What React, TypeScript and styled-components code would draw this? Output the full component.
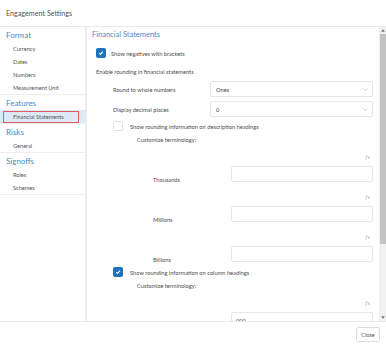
import React from "react";
import styled, { createGlobalStyle } from "styled-components";

const Global = createGlobalStyle`
  html, body { margin: 0; padding: 0; background: #fff; }
  body { font-family: Lato, "Open Sans", sans-serif; }
  * { box-sizing: border-box; }
`;

const Dialog = styled.div`
  width: 386px;
  height: 348px;
  background: #fff;
  display: flex;
  flex-direction: column;
  overflow: hidden;
`;

const Header = styled.div`
  height: 27px;
  flex: none;
  display: flex;
  align-items: center;
  padding-left: 6px;
  border-bottom: 1px solid #e9e9e9;
  font-size: 7.2px;
  color: #555;
`;

const Body = styled.div`
  flex: none;
  height: 294px;
  display: flex;
`;

const Sidebar = styled.div`
  width: 87px;
  flex: none;
  border-right: 2px solid #ececec;
  display: flex;
  flex-direction: column;
`;

const Section = styled.div`
  border-bottom: 1px solid #eeeeee;
  display: flex;
  flex-direction: column;
`;

const SectionTitle = styled.div`
  height: 15px;
  display: flex;
  align-items: center;
  padding-left: 6px;
  font-size: 8px;
  color: #4a8bc8;
`;

const NavItem = styled.div<{ $active?: boolean }>`
  height: 13px;
  display: flex;
  align-items: center;
  padding-left: 3px;
  font-size: 5.6px;
  color: #555;
  background: ${(p) => (p.$active ? "#dde9f5" : "transparent")};
`;

const NavLabel = styled.span<{ $active?: boolean }>`
  display: flex;
  align-items: center;
  height: 12px;
  width: 76px;
  padding-left: 9px;
  border: 1px solid ${(p) => (p.$active ? "#e05a63" : "transparent")};
`;

const Main = styled.div`
  flex: 1;
  min-width: 0;
  overflow: hidden;
  padding: 2px 6px 10px 5px;
  color: #4d4d4d;
  font-size: 5.7px;
`;

const ScrollTrack = styled.div`
  width: 7px;
  flex: none;
  background: #f1f1f1;
  display: flex;
  flex-direction: column;
  align-items: center;
`;

const ScrollArrow = styled.div`
  height: 7px;
  flex: none;
  display: flex;
  align-items: center;
  justify-content: center;
`;

const ScrollThumb = styled.div`
  width: 6px;
  height: 210px;
  flex: none;
  background: #c3c3c3;
`;

const ScrollSpacer = styled.div`
  flex: 1;
`;

const PanelTitle = styled.div`
  height: 10px;
  display: flex;
  align-items: center;
  font-size: 7.5px;
  color: #4a8bc8;
`;

const CheckRow = styled.div<{ $indent: number; $gap: number; $mt: number }>`
  display: flex;
  align-items: center;
  height: 10px;
  margin-top: ${(p) => p.$mt}px;
  margin-left: ${(p) => p.$indent}px;
  gap: ${(p) => p.$gap}px;
  white-space: nowrap;
`;

const Box = styled.span<{ $checked?: boolean }>`
  width: 10px;
  height: 10px;
  flex: none;
  border-radius: 1.5px;
  display: flex;
  align-items: center;
  justify-content: center;
  background: ${(p) => (p.$checked ? "#1f74bd" : "#fff")};
  border: 1px solid ${(p) => (p.$checked ? "#1f74bd" : "#e2e2e2")};
`;

const TextLine = styled.div<{ $indent: number; $mt: number }>`
  height: 8px;
  display: flex;
  align-items: center;
  margin-top: ${(p) => p.$mt}px;
  margin-left: ${(p) => p.$indent}px;
`;

const SelectRow = styled.div<{ $mt: number }>`
  display: grid;
  grid-template-columns: 97px 1fr;
  align-items: center;
  margin-top: ${(p) => p.$mt}px;
  padding-left: 21px;
`;

const SelectBox = styled.div`
  height: 16px;
  border: 1px solid #e6e6e6;
  border-radius: 2px;
  display: flex;
  align-items: center;
  justify-content: space-between;
  padding: 0 4px 0 5px;
  color: #444;
`;

const FieldGroup = styled.div<{ $mt: number }>`
  display: grid;
  grid-template-columns: 78px 1fr;
  align-items: end;
  margin-top: ${(p) => p.$mt}px;
  padding-left: 61px;
`;

const FieldLabel = styled.div`
  height: 8px;
  display: flex;
  align-items: center;
  margin-bottom: -1px;
`;

const FieldCol = styled.div`
  display: flex;
  flex-direction: column;
  gap: 5px;
`;

const Fx = styled.div`
  height: 8px;
  display: flex;
  align-items: center;
  justify-content: flex-end;
  padding-right: 3px;
  font-size: 5px;
  font-style: italic;
  color: #9a9a9a;
  font-family: "DejaVu Serif", serif;
`;

const Input = styled.div`
  height: 16px;
  border: 1px solid #e6e6e6;
  border-radius: 2px;
  display: flex;
  align-items: center;
  padding-left: 4px;
  color: #444;
`;

const Footer = styled.div`
  flex: 1;
  border-top: 1px solid #e9e9e9;
  display: flex;
  align-items: flex-start;
  justify-content: flex-end;
  padding: 5px 6px 0 0;
`;

const CloseButton = styled.button`
  width: 24px;
  height: 15px;
  padding: 0;
  border: 1px solid #dcdcdc;
  border-radius: 2px;
  background: #fff;
  font-family: Lato, sans-serif;
  font-size: 5.6px;
  color: #555;
`;

const Check = () => (
  <svg width="6" height="6" viewBox="0 0 10 10">
    <path d="M2 5.2 L4.2 7.3 L8.2 2.8" fill="none" stroke="#fff" strokeWidth="1.8" />
  </svg>
);

const Chevron = () => (
  <svg width="5" height="3" viewBox="0 0 10 6">
    <path d="M1 1 L5 5 L9 1" fill="none" stroke="#aaa" strokeWidth="1.2" />
  </svg>
);

const Arrow = ({ up }: { up?: boolean }) => (
  <svg width="4" height="3" viewBox="0 0 8 5">
    <path d={up ? "M0 5 L4 0 L8 5 Z" : "M0 0 L4 5 L8 0 Z"} fill="#777" />
  </svg>
);

const groups1 = [
  { label: "Thousands", value: "", mt: 10 },
  { label: "Millions", value: "", mt: 11 },
  { label: "Billions", value: "", mt: 11 },
];

const groups2 = [
  { label: "Thousands", value: "000", mt: 10 },
  { label: "Millions", value: "000,000", mt: 11 },
  { label: "Billions", value: "000,000,000", mt: 11 },
];

export default function App() {
  return (
    <>
      <Global />
      <Dialog>
        <Header>Engagement Settings</Header>
        <Body>
          <Sidebar>
            <Section>
              <SectionTitle>Format</SectionTitle>
              {["Currency", "Dates", "Numbers", "Measurement Unit"].map((t) => (
                <NavItem key={t}>
                  <NavLabel>{t}</NavLabel>
                </NavItem>
              ))}
            </Section>
            <Section>
              <SectionTitle>Features</SectionTitle>
              <NavItem $active>
                <NavLabel $active>Financial Statements</NavLabel>
              </NavItem>
            </Section>
            <Section>
              <SectionTitle>Risks</SectionTitle>
              <NavItem>
                <NavLabel>General</NavLabel>
              </NavItem>
            </Section>
            <Section>
              <SectionTitle>Signoffs</SectionTitle>
              {["Roles", "Schemes"].map((t) => (
                <NavItem key={t}>
                  <NavLabel>{t}</NavLabel>
                </NavItem>
              ))}
            </Section>
          </Sidebar>
          <Main>
            <PanelTitle>Financial Statements</PanelTitle>
            <CheckRow $indent={4} $gap={5} $mt={9}>
              <Box $checked>
                <Check />
              </Box>
              <span>Show negatives with brackets</span>
            </CheckRow>
            <TextLine $indent={4} $mt={9}>
              Enable rounding in financial statements
            </TextLine>
            <SelectRow $mt={6}>
              <span>Round to whole numbers</span>
              <SelectBox>
                <span>Ones</span>
                <Chevron />
              </SelectBox>
            </SelectRow>
            <SelectRow $mt={4}>
              <span>Display decimal places</span>
              <SelectBox>
                <span>0</span>
                <Chevron />
              </SelectBox>
            </SelectRow>
            <CheckRow $indent={21} $gap={7} $mt={4}>
              <Box />
              <span>Show rounding information on description headings</span>
            </CheckRow>
            <TextLine $indent={45} $mt={4}>
              Customize terminology:
            </TextLine>
            {groups1.map((g) => (
              <FieldGroup key={"a" + g.label} $mt={g.mt}>
                <FieldLabel>{g.label}</FieldLabel>
                <FieldCol>
                  <Fx>fx</Fx>
                  <Input>{g.value}</Input>
                </FieldCol>
              </FieldGroup>
            ))}
            <CheckRow $indent={21} $gap={7} $mt={5}>
              <Box $checked>
                <Check />
              </Box>
              <span>Show rounding information on column headings</span>
            </CheckRow>
            <TextLine $indent={45} $mt={4}>
              Customize terminology:
            </TextLine>
            {groups2.map((g) => (
              <FieldGroup key={"b" + g.label} $mt={g.mt}>
                <FieldLabel>{g.label}</FieldLabel>
                <FieldCol>
                  <Fx>fx</Fx>
                  <Input>{g.value}</Input>
                </FieldCol>
              </FieldGroup>
            ))}
          </Main>
          <ScrollTrack>
            <ScrollArrow>
              <Arrow up />
            </ScrollArrow>
            <ScrollThumb />
            <ScrollSpacer />
            <ScrollArrow>
              <Arrow />
            </ScrollArrow>
          </ScrollTrack>
        </Body>
        <Footer>
          <CloseButton>Close</CloseButton>
        </Footer>
      </Dialog>
    </>
  );
}
